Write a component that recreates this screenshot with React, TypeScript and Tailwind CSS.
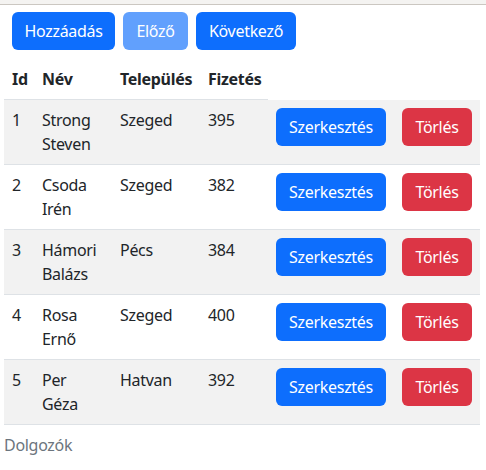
const workers = [
  { id: 1, first: "Strong", last: "Steven", city: "Szeged", salary: 395 },
  { id: 2, first: "Csoda", last: "Irén", city: "Szeged", salary: 382 },
  { id: 3, first: "Hámori", last: "Balázs", city: "Pécs", salary: 384 },
  { id: 4, first: "Rosa", last: "Ernő", city: "Szeged", salary: 400 },
  { id: 5, first: "Per", last: "Géza", city: "Hatvan", salary: 392 },
];

const cell = "p-2 align-top border-b border-[#dee2e6]";

const App = () => {
  return (
    <div className="min-h-[470px] bg-white text-[#212529] text-base leading-6 tracking-[-0.3px] font-['Noto_Sans',sans-serif]">
      {/* browser-ish top strip */}
      <div className="h-[5px] bg-[#f4f3f1] border-b border-[#cbc7c1]" />

      <div className="px-1 pt-[7px]">
        {/* Toolbar */}
        <div className="flex gap-2 px-2">
          <button className="w-[103px] h-[38px] rounded-md bg-[#0d6efd] text-white">
            Hozzáadás
          </button>
          <button
            disabled
            className="w-[65px] h-[38px] rounded-md bg-[#0d6efd] text-white opacity-65"
          >
            Előző
          </button>
          <button className="w-[100px] h-[38px] rounded-md bg-[#0d6efd] text-white">
            Következő
          </button>
        </div>

        {/* Table */}
        <table className="mt-[9px] w-[476px] table-fixed border-collapse text-left">
          <caption className="caption-bottom text-left text-[#6c757d] py-2">
            Dolgozók
          </caption>
          <colgroup>
            <col className="w-[30px]" />
            <col className="w-[78px]" />
            <col className="w-[88px]" />
            <col className="w-[68px]" />
            <col className="w-[126px]" />
            <col className="w-[86px]" />
          </colgroup>
          <thead>
            <tr>
              <th className={cell + " font-bold"}>Id</th>
              <th className={cell + " font-bold"}>Név</th>
              <th className={cell + " font-bold"}>Település</th>
              <th className={cell + " font-bold"}>Fizetés</th>
            </tr>
          </thead>
          <tbody>
            {workers.map((w, i) => (
              <tr key={w.id} className={i % 2 === 0 ? "bg-[#f2f2f2]" : "bg-white"}>
                <td className={cell}>{w.id}</td>
                <td className={cell}>
                  {w.first}
                  <br />
                  {w.last}
                </td>
                <td className={cell}>{w.city}</td>
                <td className={cell}>{w.salary}</td>
                <td className={cell}>
                  <button className="w-[110px] h-[38px] rounded-md bg-[#0d6efd] text-white">
                    Szerkesztés
                  </button>
                </td>
                <td className={cell}>
                  <button className="w-[70px] h-[38px] rounded-md bg-[#dc3545] text-white">
                    Törlés
                  </button>
                </td>
              </tr>
            ))}
          </tbody>
        </table>
      </div>
    </div>
  );
};

export default App;
